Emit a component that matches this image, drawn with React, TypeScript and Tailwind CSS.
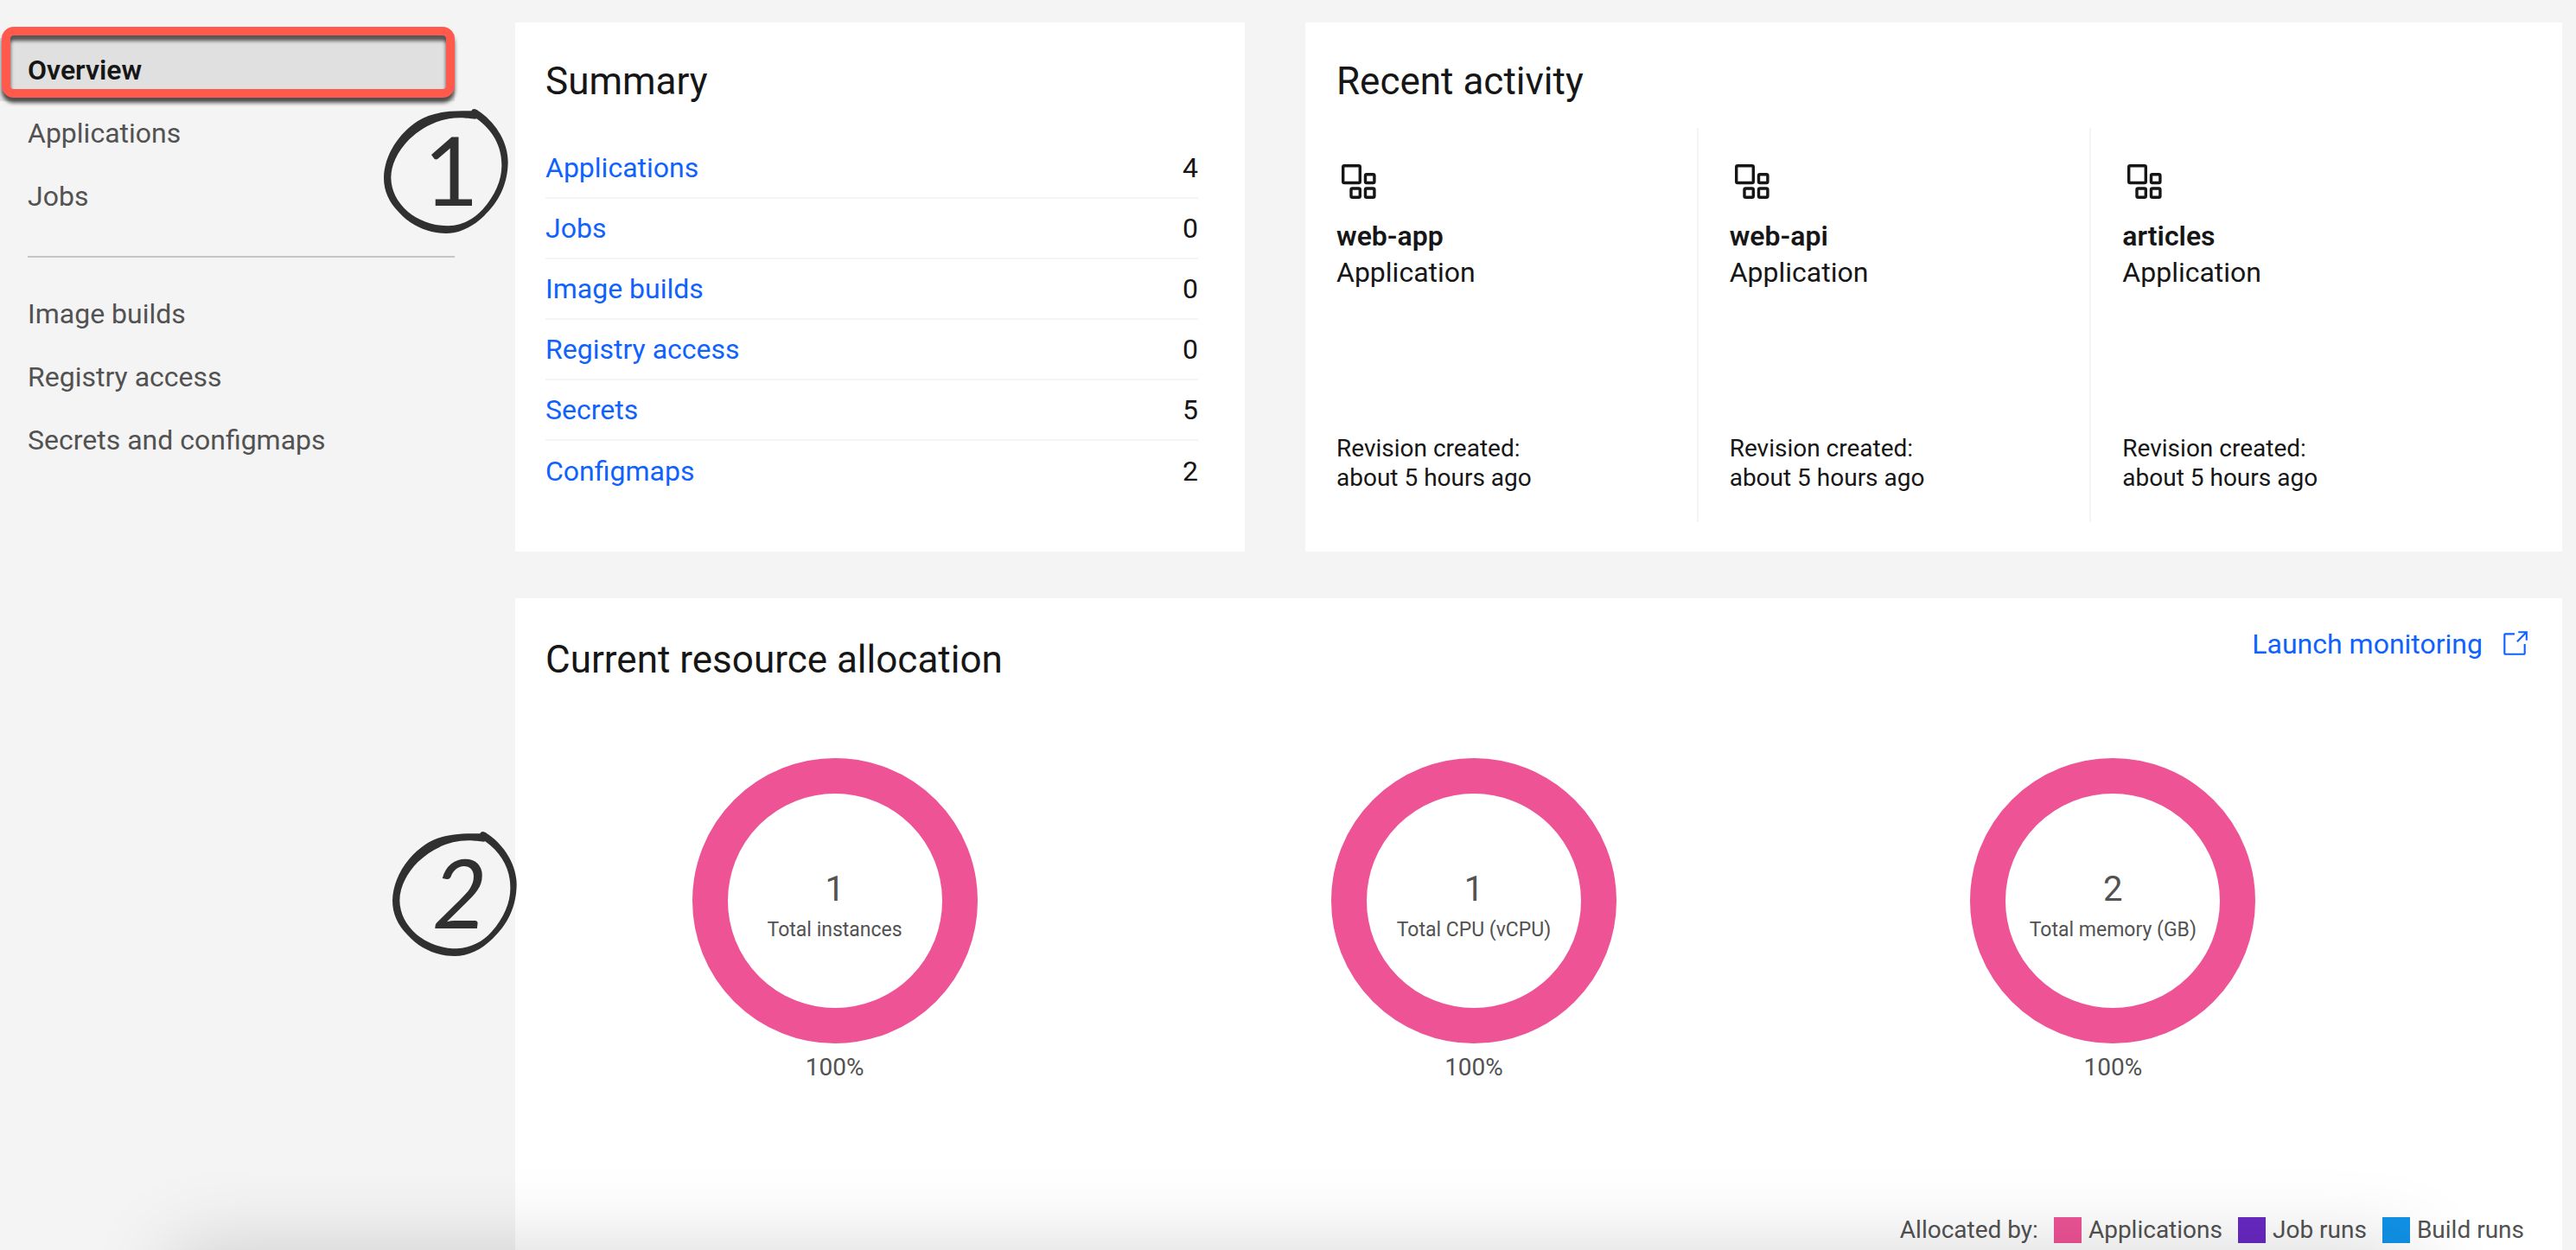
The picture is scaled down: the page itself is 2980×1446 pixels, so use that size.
const primaryNav = ["Overview", "Applications", "Jobs"];
const secondaryNav = ["Image builds", "Registry access", "Secrets and configmaps"];

const summary = [
  { label: "Applications", count: 4 },
  { label: "Jobs", count: 0 },
  { label: "Image builds", count: 0 },
  { label: "Registry access", count: 0 },
  { label: "Secrets", count: 5 },
  { label: "Configmaps", count: 2 },
];

const activity = ["web-app", "web-api", "articles"];

const resources = [
  { value: "1", label: "Total instances" },
  { value: "1", label: "Total CPU (vCPU)" },
  { value: "2", label: "Total memory (GB)" },
];

const legend = [
  { label: "Applications", swatch: "bg-[#ee5396]" },
  { label: "Job runs", swatch: "bg-[#6929c4]" },
  { label: "Build runs", swatch: "bg-[#1192e8]" },
];

function AppIcon() {
  return (
    <svg viewBox="0 0 40 40" className="ml-1.5 size-10" fill="none" stroke="#161616" strokeWidth="3.4" aria-hidden="true">
      <rect x="1.7" y="1.7" width="19.6" height="19.8" rx="1.5" />
      <rect x="27.5" y="11.7" width="10.4" height="9.8" rx="1.5" />
      <rect x="11" y="28" width="10.3" height="10.3" rx="1.5" />
      <rect x="27.5" y="28" width="10.4" height="10.3" rx="1.5" />
    </svg>
  );
}

function LaunchIcon() {
  return (
    <svg viewBox="0 0 16 16" className="size-[34px]" fill="currentColor" aria-hidden="true">
      <path d="M13 14H3c-.6 0-1-.4-1-1V3c0-.6.4-1 1-1h5v1H3v10h10V8h1v5c0 .6-.4 1-1 1Z" />
      <path d="M10 1v1h3.3L9 6.3l.7.7L14 2.7V6h1V1h-5Z" />
    </svg>
  );
}

function Marker({ text, className, textClassName }: { text: string; className: string; textClassName: string }) {
  return (
    <div className={`absolute z-10 flex size-36 items-center justify-center ${className}`}>
      <svg viewBox="72 66 432 432" className="absolute inset-0 size-full" fill="#303030" aria-hidden="true">
        <path
          fillRule="evenodd"
          d="M386 66C392 66 400 73 408 78C465 120 503 185 503 250C502 330 470 390 420 437C380 476 335 498 287 498C225 498 165 470 125 425C90 390 72 350 72 305C74 225 125 150 190 108C235 80 290 70 376 73C378 68 382 66 386 66Z
             M394 100C385 103 375 99 345 97C270 94 205 128 160 172C118 215 97 262 97 305C98 350 118 388 155 422C195 455 245 472 295 472C345 470 385 448 415 415C460 365 482 310 481 260C481 195 450 140 394 100Z"
        />
      </svg>
      <span className={`relative pb-1.5 pl-3 font-[Lato,sans-serif] text-[110px] leading-none text-[#303030] ${textClassName}`}>
        {text}
      </span>
    </div>
  );
}

function NavItem({ label, active }: { label: string; active?: boolean }) {
  return (
    <li className="relative">
      <a
        href="#"
        aria-current={active ? "page" : undefined}
        className={
          active
            ? "flex h-[73px] items-center bg-[#e0e0e0] px-8 font-semibold text-[#161616]"
            : "flex h-[73px] items-center px-8 text-[#525252]"
        }
      >
        {label}
      </a>
      {active && (
        <span className="pointer-events-none absolute -top-[13px] bottom-1 left-0.5 right-0 rounded-[14px] border-10 border-[#ff5a4c] drop-shadow-[0_6px_2px_rgba(0,0,0,0.65)]" />
      )}
    </li>
  );
}

function Donut({ value, label }: { value: string; label: string }) {
  return (
    <div className="flex flex-col items-center text-[#525252]">
      <div className="relative flex size-[330px] flex-col items-center justify-center pt-3">
        <svg viewBox="0 0 330 330" className="absolute inset-0 size-full" aria-hidden="true">
          <circle cx="165" cy="165" r="144.5" fill="none" stroke="#ee5396" strokeWidth="41" />
        </svg>
        <span className="relative text-[40px] leading-[56px]">{value}</span>
        <span className="relative text-[23px] leading-[38px]">{label}</span>
      </div>
      <span className="mt-2 text-[28px] leading-10">100%</span>
    </div>
  );
}

export default function App() {
  return (
    <div className="relative flex min-h-screen overflow-hidden bg-[#f4f4f4] font-[Roboto,sans-serif] text-[32px] leading-10 text-[#161616]">
      <nav className="w-[526px] shrink-0 pt-11" aria-label="Project">
        <ul>
          {primaryNav.map((label, i) => (
            <NavItem key={label} label={label} active={i === 0} />
          ))}
        </ul>
        <hr className="mb-7 ml-8 mt-[33px] border-t-2 border-[#c6c6c6]" />
        <ul>
          {secondaryNav.map((label) => (
            <NavItem key={label} label={label} />
          ))}
        </ul>
      </nav>

      <main className="ml-[70px] flex flex-1 flex-col gap-[54px] pr-4 pt-[26px]">
        <div className="grid grid-cols-[844fr_1454fr] gap-[70px]">
          <section className="bg-white pb-[58px] pl-[35px] pr-[54px] pt-10">
            <h2 className="mb-[38px] text-[44px] leading-[56px]">Summary</h2>
            <ul className="divide-y-2 divide-[#f4f4f4]">
              {summary.map((row) => (
                <li key={row.label} className="flex h-[70px] items-center justify-between">
                  <a href="#" className="text-[#0f62fe]">{row.label}</a>
                  <span>{row.count}</span>
                </li>
              ))}
            </ul>
          </section>

          <section className="flex flex-col bg-white pb-[34px] pr-[90px] pt-10">
            <h2 className="mb-[26px] pl-9 text-[44px] leading-[56px]">Recent activity</h2>
            <div className="grid flex-1 grid-cols-3 divide-x-2 divide-[#f4f4f4]">
              {activity.map((name) => (
                <article key={name} className="flex flex-col pb-[34px] pl-9 pt-[42px]">
                  <AppIcon />
                  <h3 className="mt-[22px] font-semibold leading-[42px]">{name}</h3>
                  <p className="leading-[42px]">Application</p>
                  <p className="mt-auto text-[28px] leading-[34px]">
                    Revision created:
                    <br />
                    about 5 hours ago
                  </p>
                </article>
              ))}
            </div>
          </section>
        </div>

        <section className="flex flex-1 flex-col bg-white pb-[3px] pt-[33px]">
          <div className="flex items-start justify-between pl-[35px] pr-[38px]">
            <h2 className="mt-2.5 text-[44px] leading-[56px]">Current resource allocation</h2>
            <a href="#" className="flex items-center gap-5 text-[#0f62fe]">
              Launch monitoring
              <LaunchIcon />
            </a>
          </div>
          <div className="mt-[86px] grid grid-cols-3 pr-[150px]">
            {resources.map((r) => (
              <Donut key={r.label} value={r.value} label={r.label} />
            ))}
          </div>
          <div className="mt-[148px] flex items-center justify-end gap-[18px] pr-11 text-[28px] text-[#525252]">
            <span>Allocated by:</span>
            {legend.map((item) => (
              <span key={item.label} className="flex items-center gap-2">
                <span className={`h-[30px] w-8 ${item.swatch}`} />
                {item.label}
              </span>
            ))}
          </div>
        </section>
      </main>

      <Marker text="1" className="left-[444px] top-[126px]" textClassName="" />
      <Marker text="2" className="left-[454px] top-[962px]" textClassName="italic" />

      <div className="pointer-events-none absolute left-[200px] right-[190px] top-full h-40 shadow-[0_0_96px_rgba(0,0,0,0.17)]" />
    </div>
  );
}
